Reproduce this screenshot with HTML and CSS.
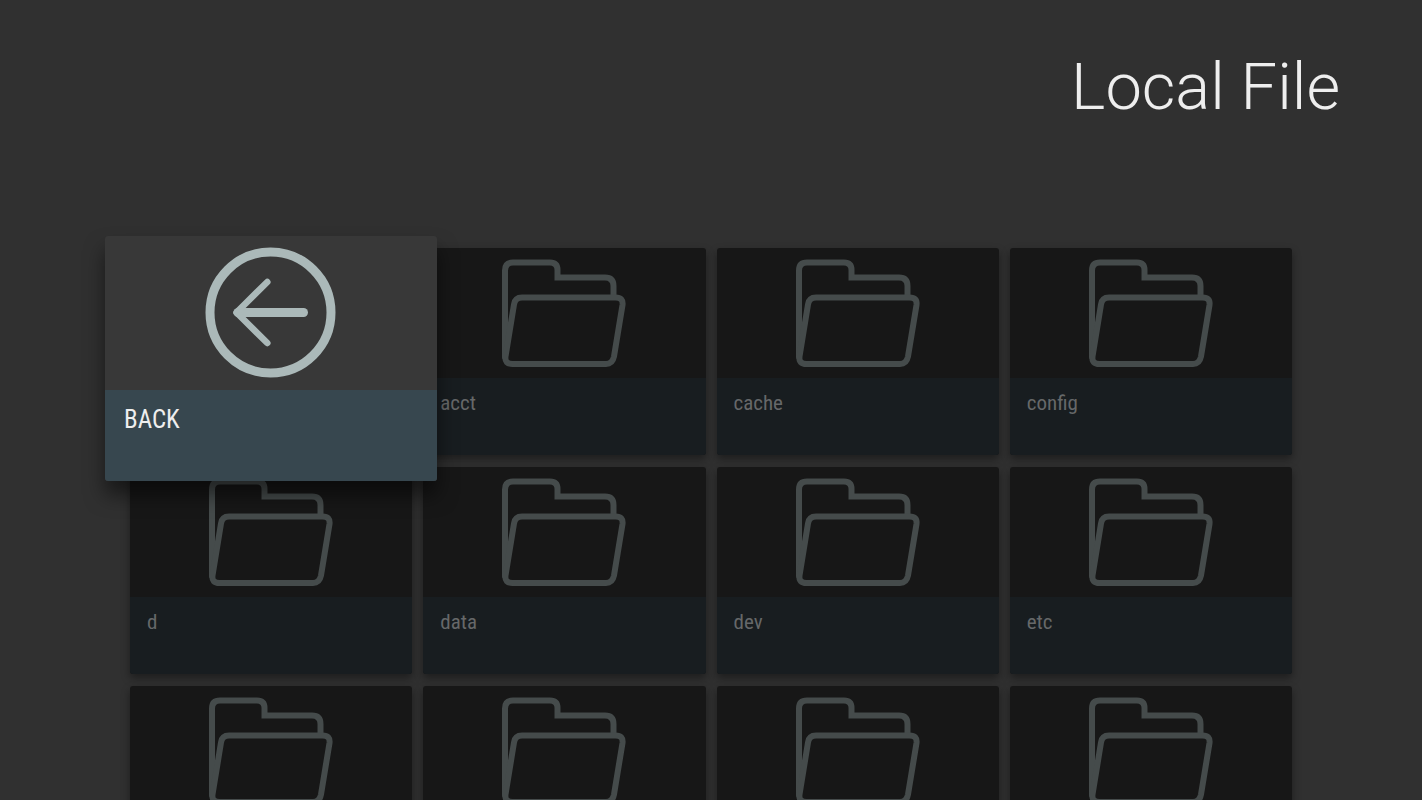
FILE: index.html
```
<!DOCTYPE html>
<html lang="en">
<head>
    <meta charset="UTF-8">
    <meta name="viewport" content="width=device-width, initial-scale=1.0">
    <title>Local File</title>
    <link rel="stylesheet" href="styles.css">
</head>
<body>
    <!-- Shared folder icon -->
    <svg class="symbols" aria-hidden="true">
        <symbol id="folder" viewBox="0 0 130 130">
            <path d="M6 109V22.500Q6 14.500 14 14.500H51Q58.500 14.500 58.500 22V29.500H106Q114.500 29.500 114.500 38V49"/>
            <path d="M23 49.500H116.500Q124.500 49.500 123.500 57L115 108.500Q113.500 116 107 116H13.500Q5.500 116 6.500 108.500L15 56.500Q16 49.500 23 49.500Z"/>
        </symbol>
    </svg>

    <header class="header">
        <h1>Local File</h1>
    </header>

    <main class="grid">
        <button class="card focused">
            <span class="thumb">
                <svg viewBox="0 0 154 154" aria-hidden="true">
                    <circle cx="76.500" cy="76.500" r="60.500" stroke-width="9"/>
                    <path d="M44 76.500H109.500" stroke-width="9"/>
                    <path d="M73.300 46L42.500 76.500L73.300 107" stroke-width="6.500"/>
                </svg>
            </span>
            <span class="info">BACK</span>
        </button>
        <button class="card">
            <span class="thumb"><svg aria-hidden="true"><use href="#folder"/></svg></span>
            <span class="info">acct</span>
        </button>
        <button class="card">
            <span class="thumb"><svg aria-hidden="true"><use href="#folder"/></svg></span>
            <span class="info">cache</span>
        </button>
        <button class="card">
            <span class="thumb"><svg aria-hidden="true"><use href="#folder"/></svg></span>
            <span class="info">config</span>
        </button>
        <button class="card">
            <span class="thumb"><svg aria-hidden="true"><use href="#folder"/></svg></span>
            <span class="info">d</span>
        </button>
        <button class="card">
            <span class="thumb"><svg aria-hidden="true"><use href="#folder"/></svg></span>
            <span class="info">data</span>
        </button>
        <button class="card">
            <span class="thumb"><svg aria-hidden="true"><use href="#folder"/></svg></span>
            <span class="info">dev</span>
        </button>
        <button class="card">
            <span class="thumb"><svg aria-hidden="true"><use href="#folder"/></svg></span>
            <span class="info">etc</span>
        </button>
        <button class="card">
            <span class="thumb"><svg aria-hidden="true"><use href="#folder"/></svg></span>
            <span class="info"></span>
        </button>
        <button class="card">
            <span class="thumb"><svg aria-hidden="true"><use href="#folder"/></svg></span>
            <span class="info"></span>
        </button>
        <button class="card">
            <span class="thumb"><svg aria-hidden="true"><use href="#folder"/></svg></span>
            <span class="info"></span>
        </button>
        <button class="card">
            <span class="thumb"><svg aria-hidden="true"><use href="#folder"/></svg></span>
            <span class="info"></span>
        </button>
    </main>
</body>
</html>
```

FILE: styles.css
```
* {
    box-sizing: border-box;
}
body {
    margin: 0;
    height: 100vh;
    overflow: hidden;
    background-color: #303030;
    color: #eee;
    font-family: Roboto, sans-serif;
}
.symbols {
    display: none;
}
.header {
    padding: 47px 82px 0;
    text-align: right;
}
.header h1 {
    margin: 0;
    font-size: 65px;
    font-weight: 300;
    line-height: 80px;
}
.grid {
    display: grid;
    grid-template-columns: repeat(4, 1fr);
    gap: 12px 11px;
    padding: 121px 130px 0;
}
.card {
    display: flex;
    flex-direction: column;
    padding: 0;
    border: none;
    border-radius: 3px;
    overflow: hidden;
    background-color: #171717;
    color: #666869;
    font-family: "Roboto Condensed", Roboto, sans-serif;
    font-size: 21px;
    line-height: 24px;
    text-align: left;
    cursor: pointer;
    box-shadow: 0 4px 8px rgba(0, 0, 0, 0.4);
}
.thumb {
    display: flex;
    justify-content: center;
    width: 100%;
}
.thumb svg {
    width: 130px;
    height: 130px;
    fill: none;
    stroke: #454b4b;
    stroke-width: 6;
    stroke-linecap: round;
}
.info {
    width: 100%;
    height: 77px;
    padding: 13px 17px;
    background-color: #181d20;
}

/* The focused card grows over its neighbours */
.focused {
    position: relative;
    z-index: 1;
    margin: -12px -25px -26px;
    background-color: #383838;
    color: #eee;
    font-size: 25px;
    line-height: 28px;
    outline: none;
    box-shadow: 0 14px 20px rgba(0, 0, 0, 0.5);
}
.focused .thumb svg {
    width: 154px;
    height: 154px;
    stroke: #abb9b9;
    stroke-linejoin: round;
}
.focused .info {
    height: 91px;
    padding: 16px 19px;
    background-color: #37474f;
}
```
